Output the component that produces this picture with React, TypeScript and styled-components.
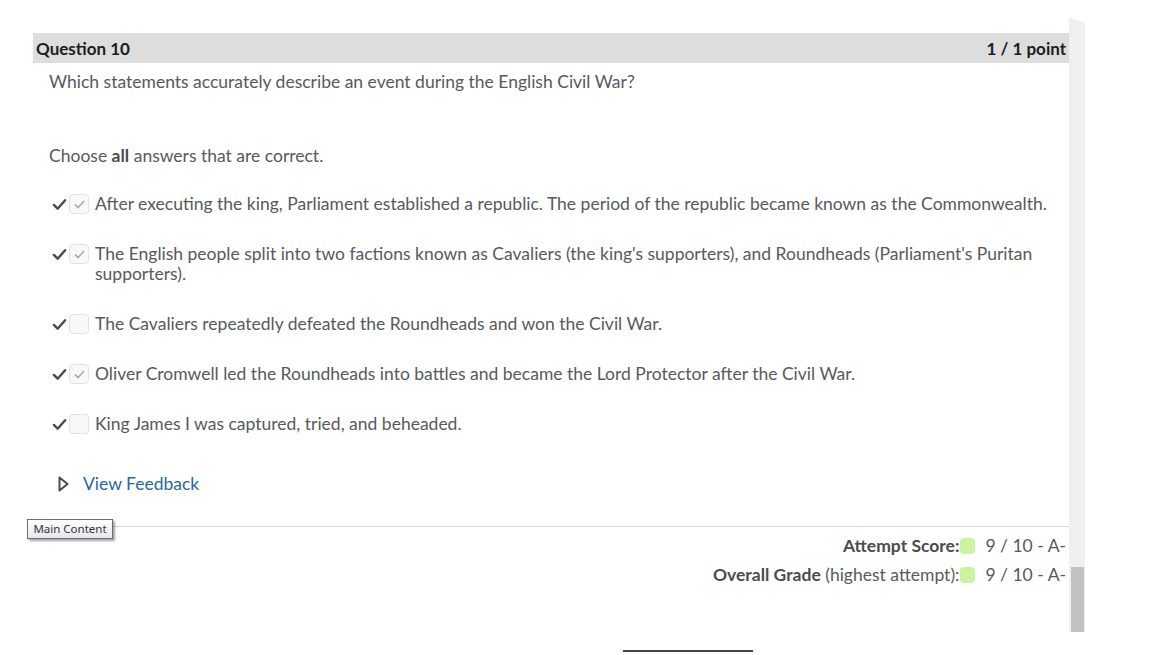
import React from 'react';
import styled, { createGlobalStyle } from 'styled-components';

const GlobalStyle = createGlobalStyle`
  body {
    margin: 0;
    background: #ffffff;
    font-family: Lato, "Noto Sans", sans-serif;
  }
`;

const SPage = styled.div`
  width: 1153px;
  height: 655px;
  overflow: hidden;
  display: flex;
  flex-direction: column;
`;

const STop = styled.div`
  display: flex;
  align-items: flex-start;
  padding-top: 17px;
`;

const SMain = styled.div`
  margin-left: 33px;
  margin-top: 16px;
  width: 1036px;
`;

const SHeader = styled.div`
  height: 30px;
  background-color: #dddddd;
  display: flex;
  justify-content: space-between;
  align-items: center;
  padding: 0 3px 0 3px;
  font-size: 17px;
  font-weight: 700;
  color: #1c1c1c;
`;

const SBody = styled.div`
  padding-left: 16px;
  padding-right: 8px;
  color: #565a5c;
  font-size: 17.5px;
`;

const SPrompt = styled.p<{ $top: number }>`
  margin: ${(p) => p.$top}px 0 0;
  line-height: 24px;

  b {
    color: #494c4e;
  }
`;

const SAnswers = styled.div`
  margin-top: 26px;
  display: flex;
  flex-direction: column;
  gap: 30px;
  padding-left: 3px;
`;

const SAnswer = styled.div`
  display: flex;
  align-items: flex-start;
`;

const SMark = styled.span`
  width: 17px;
  height: 20px;
  display: flex;
  align-items: center;
  justify-content: flex-start;
  flex-shrink: 0;
`;

const SBox = styled.span`
  width: 18px;
  height: 18px;
  border: 1px solid #e2e3e4;
  border-radius: 4px;
  background-color: #f8f8f8;
  display: flex;
  align-items: center;
  justify-content: center;
  flex-shrink: 0;
`;

const SAnswerText = styled.span`
  margin-left: 6px;
  line-height: 20px;
`;

const SFeedback = styled.div`
  margin-top: 38px;
  display: flex;
  align-items: center;
  gap: 14px;
  padding-left: 9px;
  line-height: 24px;
  font-size: 17.5px;
  color: #2868a0;
`;

const SDivider = styled.div`
  margin-top: 30px;
  border-top: 1px solid #d6d9dc;
  position: relative;
`;

const STooltip = styled.div`
  position: absolute;
  left: -6px;
  top: -8px;
  width: 84px;
  height: 18px;
  border: 1px solid #6e6e6e;
  background: linear-gradient(#ffffff, #e6e7ef);
  box-shadow: 2px 2px 2px rgba(0, 0, 0, 0.35);
  font-family: "Noto Sans", "DejaVu Sans", sans-serif;
  font-size: 11.5px;
  line-height: 18px;
  color: #333333;
  text-align: center;
`;

const SScores = styled.div`
  margin-top: 4px;
  padding-right: 3px;
  display: flex;
  flex-direction: column;
  align-items: flex-end;
  font-size: 17.5px;
  color: #565a5c;
`;

const SScoreRow = styled.div`
  display: flex;
  align-items: center;
  line-height: 29px;

  b {
    color: #494c4e;
  }
`;

const SGradeChip = styled.span`
  width: 15px;
  height: 16px;
  border-radius: 4px;
  background-color: #c9f5a2;
  margin: 0 10px 0 1px;
`;

const STrack = styled.div`
  width: 16px;
  height: 615px;
  background-color: #f0f0f0;
  display: flex;
  flex-direction: column;
  justify-content: flex-end;
  align-items: center;
  clip-path: polygon(0 0, 100% 6px, 100% 100%, 0 100%);
`;

const SThumb = styled.div`
  width: 13px;
  height: 65px;
  background-color: #c1c1c1;
`;

const SFooterLine = styled.div`
  margin: 18px 0 0 623px;
  width: 130px;
  height: 2px;
  background-color: #3f4652;
`;

const Tick: React.FC<{ color: string; size: number }> = ({ color, size }) => (
  <svg width={size} height={size} viewBox="0 0 16 16">
    <path
      d="M2 8.5 L6 12.5 L14 3.5"
      fill="none"
      stroke={color}
      strokeWidth={size > 12 ? 2.6 : 2.2}
      strokeLinecap="round"
      strokeLinejoin="round"
    />
  </svg>
);

const answers = [
  {
    text: 'After executing the king, Parliament established a republic. The period of the republic became known as the Commonwealth.',
    checked: true,
  },
  {
    text: "The English people split into two factions known as Cavaliers (the king's supporters), and Roundheads (Parliament's Puritan supporters).",
    checked: true,
  },
  { text: 'The Cavaliers repeatedly defeated the Roundheads and won the Civil War.', checked: false },
  {
    text: 'Oliver Cromwell led the Roundheads into battles and became the Lord Protector after the Civil War.',
    checked: true,
  },
  { text: 'King James I was captured, tried, and beheaded.', checked: false },
];

export default function App() {
  return (
    <SPage>
      <GlobalStyle />
      <STop>
        <SMain>
          <SHeader>
            <span>Question 10</span>
            <span>1 / 1 point</span>
          </SHeader>
          <SBody>
            <SPrompt $top={7}>Which statements accurately describe an event during the English Civil War?</SPrompt>
            <SPrompt $top={50}>
              Choose <b>all</b> answers that are correct.
            </SPrompt>
            <SAnswers>
              {answers.map((a) => (
                <SAnswer key={a.text}>
                  <SMark>
                    <Tick color="#494c4e" size={15} />
                  </SMark>
                  <SBox>{a.checked && <Tick color="#a9abad" size={11} />}</SBox>
                  <SAnswerText>{a.text}</SAnswerText>
                </SAnswer>
              ))}
            </SAnswers>
            <SFeedback>
              <svg width="11" height="16" viewBox="0 0 11 16">
                <path d="M1.5 1.5 L9.5 8 L1.5 14.5 Z" fill="none" stroke="#494c4e" strokeWidth="2" strokeLinejoin="round" />
              </svg>
              <span>View Feedback</span>
            </SFeedback>
          </SBody>
          <SDivider>
            <STooltip>Main Content</STooltip>
          </SDivider>
          <SScores>
            <SScoreRow>
              <b>Attempt Score:</b>
              <SGradeChip />
              <span>9 / 10 - A-</span>
            </SScoreRow>
            <SScoreRow>
              <b>Overall Grade</b>&nbsp;(highest attempt):
              <SGradeChip />
              <span>9 / 10 - A-</span>
            </SScoreRow>
          </SScores>
        </SMain>
        <STrack>
          <SThumb />
        </STrack>
      </STop>
      <SFooterLine />
    </SPage>
  );
}
